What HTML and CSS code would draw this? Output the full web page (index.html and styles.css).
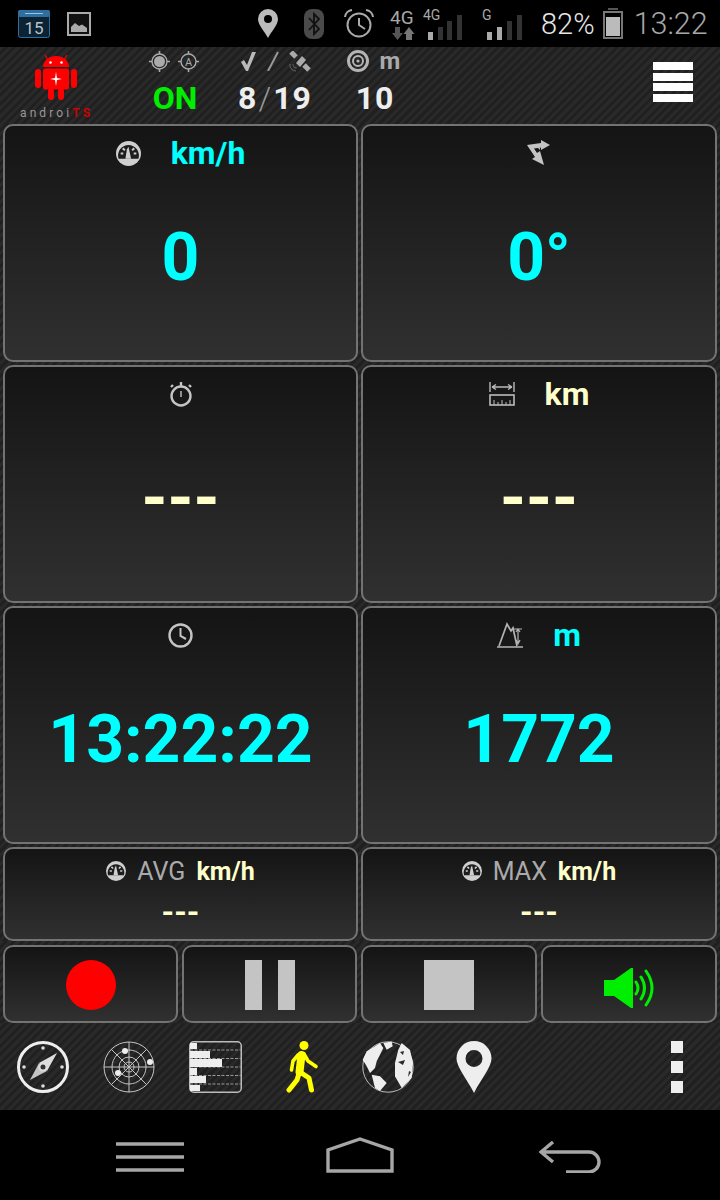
FILE: index.html
```html
<!DOCTYPE html>
<html lang="en">
<head>
    <meta charset="UTF-8">
    <meta name="viewport" content="width=device-width, initial-scale=1.0">
    <title>AndroiTS GPS</title>
    <link rel="stylesheet" href="styles.css">
</head>
<body>
    <svg class="defs" width="0" height="0">
        <symbol id="gauge" viewBox="0 0 24 24">
            <circle cx="12" cy="12" r="12" fill="#cfcfcf"/>
            <path d="M2.500 17 A10 10 0 1 1 21.500 17 Z" fill="#1d1d1d"/>
            <path d="M9 17 L10.500 8 L12 5.500 L14.500 17 Z" fill="#cfcfcf"/>
            <path d="M4.500 12 H7 M6.500 7 L8.500 9 M17.500 7 L15.500 9 M17 12 H19.500" stroke="#cfcfcf" stroke-width="2"/>
        </symbol>
    </svg>

    <div class="statusbar">
        <svg class="st-cal" width="32" height="28" viewBox="0 0 32 28">
            <rect x="0.5" y="0.5" width="31" height="27" rx="2" fill="#0d2233" stroke="#2f6f9f"/>
            <rect x="0" y="0" width="32" height="7" rx="2" fill="#2f6f9f"/>
            <line x1="7" y1="3.5" x2="25" y2="3.5" stroke="#9cc4e0"/>
            <text x="16" y="24" text-anchor="middle" font-family="Roboto" font-size="17" fill="#b8c4cc">15</text>
        </svg>
        <svg class="st-img" width="24" height="24" viewBox="0 0 24 24">
            <rect x="1" y="1" width="22" height="22" fill="#111" stroke="#aaa" stroke-width="2"/>
            <path d="M4 20 V15 L8 11 L12 14 L15 12.5 L20 16 V20 Z" fill="#aaa"/>
        </svg>
        <svg class="st-pin" width="20" height="29" viewBox="0 0 20 29">
            <path fill-rule="evenodd" d="M10 0 A10 10 0 0 1 20 10 C20 16 13 23 10 29 C7 23 0 16 0 10 A10 10 0 0 1 10 0 Z M10 6 A4 4 0 1 0 10 14 A4 4 0 1 0 10 6 Z" fill="#bbb"/>
        </svg>
        <svg class="st-bt" width="20" height="30" viewBox="0 0 20 30">
            <rect x="0" y="0" width="20" height="30" rx="8" fill="#4a4a4a"/>
            <path d="M5 9 L15 20 L10 25 V5 L15 10 L5 21" fill="none" stroke="#111" stroke-width="1.8"/>
        </svg>
        <svg class="st-alarm" width="30" height="29" viewBox="0 0 30 29">
            <circle cx="15" cy="16" r="11.5" fill="none" stroke="#aaa" stroke-width="2"/>
            <path d="M15 9 V16 L21 20" fill="none" stroke="#aaa" stroke-width="2"/>
            <path d="M1 8 A8 8 0 0 1 8 1 M22 1 A8 8 0 0 1 29 8" fill="none" stroke="#aaa" stroke-width="2"/>
        </svg>
        <svg class="st-net" width="28" height="40" viewBox="0 0 28 40">
            <text x="0" y="20" font-family="Roboto" font-size="19" fill="#a8a8a8">4G</text>
            <path d="M5 23 H10 V29 H13 L7.500 36 L2 29 H5 Z" fill="#555"/>
            <path d="M16 36 V30 H13.500 L19 23 L24.500 30 H22 V36 Z" fill="#777"/>
        </svg>
        <svg class="st-sig" width="40" height="40" viewBox="0 0 40 40">
            <text x="0" y="16" font-family="Roboto" font-size="14" fill="#a8a8a8">4G</text>
            <rect x="5" y="28" width="5" height="8" fill="#aaa"/>
            <rect x="15" y="23" width="5" height="13" fill="#333"/>
            <rect x="24" y="17" width="5" height="19" fill="#333"/>
            <rect x="34" y="11" width="5" height="25" fill="#333"/>
        </svg>
        <svg class="st-sig2" width="41" height="40" viewBox="0 0 41 40">
            <text x="0" y="16" font-family="Roboto" font-size="14" fill="#a8a8a8">G</text>
            <rect x="5" y="28" width="5" height="8" fill="#aaa"/>
            <rect x="15" y="23" width="5" height="13" fill="#aaa"/>
            <rect x="25" y="17" width="5" height="19" fill="#333"/>
            <rect x="35" y="11" width="5" height="25" fill="#333"/>
        </svg>
        <span class="st-pct">82%</span>
        <svg class="st-batt" width="20" height="31" viewBox="0 0 20 31">
            <rect x="5" y="0" width="10" height="2" fill="#555"/>
            <rect x="1" y="4" width="18" height="26" fill="none" stroke="#777" stroke-width="2"/>
            <rect x="3" y="9" width="14" height="19" fill="#bbb"/>
        </svg>
        <span class="st-time">13:22</span>
    </div>

    <div class="carbon topbar">
        <div class="logo">
            <svg width="42" height="48" viewBox="0 0 42 48">
                <path d="M10 3 L13 8 M32 3 L29 8" stroke="#f00" stroke-width="1.2"/>
                <path d="M8 15 A13 11 0 0 1 34 15 Z" fill="#f00"/>
                <circle cx="15.500" cy="10.500" r="1.300" fill="#fff"/>
                <circle cx="26.500" cy="10.500" r="1.300" fill="#fff"/>
                <rect x="8" y="16.500" width="26" height="21" rx="2" fill="#f00"/>
                <rect x="0" y="17" width="6" height="19" rx="3" fill="#f00"/>
                <rect x="36" y="17" width="6" height="19" rx="3" fill="#f00"/>
                <rect x="13" y="36" width="6" height="12" rx="3" fill="#f00"/>
                <rect x="23" y="36" width="6" height="12" rx="3" fill="#f00"/>
                <path d="M21 20 L22 26 L27 27 L22 28 L21 34 L20 28 L15 27 L20 26 Z" fill="#fff"/>
            </svg>
            <div class="logo-text">androi<span class="logo-ts">TS</span></div>
        </div>
        <div class="stat">
            <div class="stat-icons fix">
                <svg width="21" height="21" viewBox="0 0 21 21">
                    <circle cx="10.500" cy="10.500" r="7.500" fill="none" stroke="#aaa" stroke-width="1.400"/>
                    <circle cx="10.500" cy="10.500" r="5.500" fill="#aaa"/>
                    <path d="M10.500 0 V3 M10.500 18 V21 M0 10.500 H3 M18 10.500 H21" stroke="#aaa" stroke-width="1.600"/>
                </svg>
                <svg width="21" height="21" viewBox="0 0 21 21">
                    <circle cx="10.500" cy="10.500" r="7.500" fill="none" stroke="#aaa" stroke-width="1.400"/>
                    <path d="M10.500 0 V3 M10.500 18 V21 M0 10.500 H3 M18 10.500 H21" stroke="#aaa" stroke-width="1.600"/>
                    <text x="10.500" y="14.500" text-anchor="middle" font-family="Roboto" font-size="11" fill="#aaa">A</text>
                </svg>
            </div>
            <div class="stat-value on">ON</div>
        </div>
        <div class="stat">
            <div class="stat-icons sats">
                <svg width="17" height="21" viewBox="0 0 17 21">
                    <path d="M1 11 L6 20 L8 20 L16 1 L12 1 L7 14 L4 9 Z" fill="#bbb"/>
                </svg>
                <svg width="12" height="20" viewBox="0 0 12 20">
                    <path d="M1 20 L11 1" stroke="#999" stroke-width="2"/>
                </svg>
                <svg width="22" height="21" viewBox="0 0 22 21">
                    <path d="M2 1 L7 6 M15 14 L20 19" stroke="#aaa" stroke-width="5"/>
                    <path d="M7 12 L13 5 L17 9 L11 16 Z" fill="#aaa"/>
                    <path d="M1 13 A6 6 0 0 0 7 20 M4 13 A3.500 3.500 0 0 0 7.500 17" fill="none" stroke="#666"/>
                </svg>
            </div>
            <div class="stat-value">8<span class="slash">/</span>19</div>
        </div>
        <div class="stat">
            <div class="stat-icons acc">
                <svg width="22" height="22" viewBox="0 0 22 22">
                    <circle cx="11" cy="11" r="9.500" fill="none" stroke="#b4b4b4" stroke-width="3"/>
                    <circle cx="11" cy="11" r="5" fill="none" stroke="#b4b4b4" stroke-width="2"/>
                    <circle cx="11" cy="11" r="1.600" fill="#b4b4b4"/>
                </svg>
                <span class="acc-unit">m</span>
            </div>
            <div class="stat-value">10</div>
        </div>
        <div class="burger">
            <i></i><i></i><i></i><i></i>
        </div>
    </div>

    <div class="panels">
        <div class="tile">
            <div class="tile-head">
                <svg width="25" height="25"><use href="#gauge"/></svg>
                <span class="unit cyan">km/h</span>
            </div>
            <div class="tile-value cyan">0</div>
        </div>
        <div class="tile">
            <div class="tile-head">
                <svg width="26" height="26" viewBox="0 0 26 26">
                    <path fill-rule="evenodd" d="M1 5 L15 3 L15 0 L24 5 L15 10 L15 7.500 L8 8.500 L11 13 L14 11 L18 25 L6 19 L9 17 Z M12 8 L14 7.500 L14 10 Z" fill="#c4c4c4"/>
                </svg>
            </div>
            <div class="tile-value cyan">0°</div>
        </div>
        <div class="tile">
            <div class="tile-head">
                <svg width="24" height="25" viewBox="0 0 24 25">
                    <circle cx="12" cy="14" r="9.500" fill="none" stroke="#c4c4c4" stroke-width="2.400"/>
                    <path d="M12 9 V15" stroke="#c4c4c4" stroke-width="1.400"/>
                    <path d="M12 0 V4.500 M2 5 L4 3 M22 5 L20 3" stroke="#c4c4c4" stroke-width="2.400"/>
                </svg>
            </div>
            <div class="tile-value cream">---</div>
        </div>
        <div class="tile">
            <div class="tile-head">
                <svg width="26" height="24" viewBox="0 0 26 24">
                    <path d="M1 0 V10 M25 0 V10 M3 5 H23 M3 5 L7 2.500 M3 5 L7 7.500 M23 5 L19 2.500 M23 5 L19 7.500" fill="none" stroke="#bbb" stroke-width="1.400"/>
                    <rect x="1" y="13" width="24" height="10" fill="none" stroke="#bbb" stroke-width="1.600"/>
                    <path d="M5 23 V18 M9 23 V20 M13 23 V18 M17 23 V20 M21 23 V18" stroke="#bbb"/>
                </svg>
                <span class="unit cream">km</span>
            </div>
            <div class="tile-value cream">---</div>
        </div>
        <div class="tile">
            <div class="tile-head">
                <svg width="25" height="25" viewBox="0 0 25 25">
                    <circle cx="12.500" cy="12.500" r="11" fill="none" stroke="#c4c4c4" stroke-width="2.400"/>
                    <path d="M12.500 5 V13 L18 16" fill="none" stroke="#c4c4c4" stroke-width="2"/>
                </svg>
            </div>
            <div class="tile-value cyan">13:22:22</div>
        </div>
        <div class="tile">
            <div class="tile-head">
                <svg width="26" height="26" viewBox="0 0 26 26">
                    <path d="M0 25 H26 M2 24 L10 2 L14 9 L16 6 L20 24" fill="none" stroke="#b4b4b4" stroke-width="1.700"/>
                    <path d="M17 7 H25 M21 7 V21 M19 18 L21 22 L23 18 M19 10 L21 7 L23 10" fill="none" stroke="#b4b4b4" stroke-width="1.200"/>
                </svg>
                <span class="unit cyan">m</span>
            </div>
            <div class="tile-value cyan">1772</div>
        </div>
        <div class="tile tile-small">
            <div class="tile-head">
                <svg width="20" height="20"><use href="#gauge"/></svg>
                <span class="label">AVG</span>
                <span class="unit cream">km/h</span>
            </div>
            <div class="tile-value cream">---</div>
        </div>
        <div class="tile tile-small">
            <div class="tile-head">
                <svg width="20" height="20"><use href="#gauge"/></svg>
                <span class="label">MAX</span>
                <span class="unit cream">km/h</span>
            </div>
            <div class="tile-value cream">---</div>
        </div>
    </div>

    <div class="controls">
        <div class="tile ctrl"><div class="rec"></div></div>
        <div class="tile ctrl"><div class="pause"><i></i><i></i></div></div>
        <div class="tile ctrl"><div class="stop"></div></div>
        <div class="tile ctrl">
            <svg class="speaker" width="51" height="40" viewBox="0 0 51 40">
                <path d="M0 12 H10 L27 0 H29 V40 H27 L10 28 H0 Z" fill="#0e0"/>
                <path d="M32 14 Q36 20 32 26 M37 9 Q44 20 37 31 M42 3 Q54 20 42 37" fill="none" stroke="#0e0" stroke-width="3" stroke-linecap="round"/>
            </svg>
        </div>
    </div>

    <div class="carbon toolbar">
        <svg width="52" height="52" viewBox="0 0 52 52">
            <circle cx="26" cy="26" r="24.500" fill="none" stroke="#eee" stroke-width="3"/>
            <path d="M40 12 L30 30 L22 22 Z" fill="#ddd"/>
            <path d="M13 39 L22 22 L30 30 Z" fill="#c4c4c4"/>
            <circle cx="26" cy="26" r="3.500" fill="#333" stroke="#ddd" stroke-width="2"/>
            <circle cx="26" cy="7" r="1.800" fill="#ddd"/><circle cx="26" cy="45" r="1.800" fill="#ddd"/>
            <circle cx="7" cy="26" r="1.800" fill="#ddd"/><circle cx="45" cy="26" r="1.800" fill="#ddd"/>
        </svg>
        <svg width="52" height="52" viewBox="0 0 52 52">
            <g fill="none" stroke="#c4c4c4" stroke-width="1">
                <circle cx="26" cy="26" r="25"/><circle cx="26" cy="26" r="17"/>
                <circle cx="26" cy="26" r="10"/><circle cx="26" cy="26" r="5"/>
                <path d="M26 1 V51 M1 26 H51 M8.300 8.300 L43.700 43.700 M43.700 8.300 L8.300 43.700"/>
            </g>
            <circle cx="22" cy="10" r="3" fill="#eee"/>
            <circle cx="47" cy="21" r="3" fill="#eee"/>
            <circle cx="15" cy="32" r="3" fill="#eee"/>
        </svg>
        <svg width="53" height="52" viewBox="0 0 53 52">
            <rect x="0.750" y="0.750" width="51.500" height="50.500" rx="4" fill="none" stroke="#bbb" stroke-width="1.500"/>
            <path d="M1 9 H52 M1 17.500 H52 M1 26 H52 M1 34.500 H52 M1 43 H52" stroke="#999" stroke-dasharray="3 1.500"/>
            <g fill="#eee">
                <rect x="1" y="2" width="7" height="6"/><rect x="1" y="10" width="20" height="7"/>
                <rect x="1" y="18" width="32" height="8"/><rect x="1" y="27" width="7" height="7"/>
                <rect x="1" y="35" width="16" height="7"/><rect x="1" y="44" width="10" height="6"/>
            </g>
        </svg>
        <svg class="walker" width="52" height="52" viewBox="0 0 52 52">
            <circle cx="28" cy="4.500" r="4.500" fill="#ff0"/>
            <path d="M25.500 14 L23.500 31" fill="none" stroke="#ff0" stroke-width="8" stroke-linecap="round"/>
            <path d="M23.500 31 L21 39 L13 49" fill="none" stroke="#ff0" stroke-width="5" stroke-linecap="round" stroke-linejoin="round"/>
            <path d="M24 31 L33 37 L35.500 49" fill="none" stroke="#ff0" stroke-width="5" stroke-linecap="round" stroke-linejoin="round"/>
            <path d="M22 14 L17 20 L15.500 29 M28 13 L32 20 L40 25.500" fill="none" stroke="#ff0" stroke-width="3.600" stroke-linecap="round" stroke-linejoin="round"/>
        </svg>
        <svg width="52" height="52" viewBox="0 0 52 52">
            <circle cx="26" cy="26" r="25.200" fill="none" stroke="#bbb" stroke-width="1"/>
            <path d="M0.700 18.700 L4.700 10.300 L13 5.300 L18 2 L21.300 7 L18 13.700 L14.700 20.300 L13 27 L8 32 L4.700 25.300 Z" fill="#eee"/>
            <path d="M21.300 2 L29.700 0.500 L30.700 5.300 L24.700 8.700 Z" fill="#eee"/>
            <path d="M9.700 33.700 L18 35.300 L24.700 42 L18 50 L13 47 Z" fill="#eee"/>
            <path d="M33 22 L36.300 8.700 L39.700 2 L48 9 L51 22 L49.700 37 L39.700 47 L33 35.300 Z" fill="#eee"/>
            <path d="M36 21 L43 19 L41 24 Z M47 30 L49 31 L46 36 Z M38 11 L42 10 L41 14 Z" fill="#2a2a2a"/>
        </svg>
        <svg class="pin" width="52" height="52" viewBox="0 0 52 52">
            <path fill-rule="evenodd" d="M26 0 A17.500 17.500 0 0 1 43.500 17.500 C43.500 26 33 38 26 52 C19 38 8.500 26 8.500 17.500 A17.500 17.500 0 0 1 26 0 Z M26 9 A8.500 8.500 0 1 0 26 26 A8.500 8.500 0 1 0 26 9 Z" fill="#eee"/>
        </svg>
        <div class="more"><i></i><i></i><i></i></div>
    </div>

    <div class="softkeys">
        <svg width="68" height="30" viewBox="0 0 68 30">
            <path d="M0 2 H68 M0 15 H68 M0 28 H68" stroke="#a6a6a6" stroke-width="3.400"/>
        </svg>
        <svg class="key-home" width="68" height="36" viewBox="0 0 68 36">
            <path d="M2 34 V13 L34 2 L66 13 V34 Z" fill="none" stroke="#a6a6a6" stroke-width="3.400"/>
        </svg>
        <svg class="key-back" width="62" height="32" viewBox="0 0 62 32">
            <path d="M14 1 L2 11 L14 21 M2 11 H50 A10 10 0 0 1 50 31 H27" fill="none" stroke="#a6a6a6" stroke-width="3.400"/>
        </svg>
    </div>
</body>
</html>
```
FILE: styles.css
```css
* {
    box-sizing: border-box;
}
html, body {
    margin: 0;
    background-color: #000;
}
body {
    width: 720px;
    height: 1200px;
    overflow: hidden;
    font-family: Roboto, "Liberation Sans", sans-serif;
}
svg {
    display: block;
    flex: none;
}
.defs {
    position: absolute;
}

/* status bar */
.statusbar {
    display: flex;
    align-items: center;
    height: 47px;
    padding-left: 18px;
    color: #a8a8a8;
}
.st-img { margin-left: 17px; }
.st-pin { margin-left: 167px; }
.st-bt { margin-left: 26px; }
.st-alarm { margin-left: 20px; }
.st-net { margin-left: 16px; }
.st-sig { margin-left: 5px; }
.st-sig2 { margin-left: 19px; }
.st-pct {
    margin-left: 18px;
    font-size: 29px;
    color: #e6e6e6;
    font-weight: 300;
}
.st-batt { margin-left: 8px; }
.st-time {
    margin-left: 11px;
    font-size: 30.500px;
    font-weight: 300;
}

/* striped backdrop of the top bar, panels and toolbar */
.carbon, .panels, .controls {
    background-color: #262626;
    background-image: repeating-linear-gradient(135deg, #292929 0, #292929 3px, #202020 3px, #202020 6px);
}
.topbar {
    display: flex;
    height: 77px;
}
.logo {
    width: 125px;
    padding: 5px 0 0 20px;
}
.logo svg {
    margin-left: 15px;
}
.logo-text {
    width: 80px;
    margin-top: 7px;
    font-size: 12px;
    line-height: 12px;
    letter-spacing: 3.100px;
    color: #999;
}
.logo-ts {
    color: #c00;
    font-weight: 700;
}
.stat {
    width: 100px;
    display: flex;
    flex-direction: column;
    align-items: center;
}
.stat-icons {
    height: 28px;
    display: flex;
    align-items: center;
    gap: 8px;
    margin-bottom: 4px;
}
.stat-icons.fix { margin-right: 2px; }
.stat-icons.sats { gap: 10px; }
.stat-icons.acc { gap: 11px; margin-left: -3px; }
.acc-unit {
    font-size: 24px;
    font-weight: 700;
    color: #aaa;
}
.stat-value {
    font-size: 32px;
    line-height: 38px;
    font-weight: 700;
    color: #eee;
    letter-spacing: 1px;
}
.stat-value.on {
    color: #0e0;
    letter-spacing: 0;
}
.slash {
    margin: 0 1px;
    font-weight: 300;
    color: #999;
}
.burger {
    margin: 15px 27px 0 auto;
    width: 40px;
}
.burger i {
    display: block;
    height: 8px;
    margin-bottom: 2.500px;
    background-color: #fff;
}

/* data panels */
.panels {
    display: grid;
    grid-template-columns: 355px 356px;
    grid-template-rows: 238px 238px 238px 94px;
    gap: 3px;
    padding: 0 3px;
}
.tile {
    border: 2px solid #737373;
    border-radius: 10px;
    background: linear-gradient(#141414, #303030);
    display: flex;
    flex-direction: column;
    align-items: center;
}
.tile-head {
    display: flex;
    align-items: center;
    justify-content: center;
    height: 54px;
    gap: 30px;
}
.tile-value {
    margin-top: 33px;
    font-size: 66px;
    line-height: 90px;
    font-weight: 700;
}
.unit {
    font-size: 32px;
    font-weight: 700;
}
.cyan { color: #0ff; }
.cream { color: #ffc; }
.tile-small .tile-head {
    height: 44px;
    gap: 11px;
}
.tile-small .unit {
    font-size: 25px;
}
.label {
    font-size: 25px;
    color: #aaa;
}
.tile-small .tile-value {
    margin-top: -1px;
    font-size: 32px;
    line-height: 40px;
}

/* record / pause / stop / sound */
.controls {
    display: grid;
    grid-template-columns: 175px 175px 176px 176px;
    gap: 4px;
    padding: 4px 3px 0;
    height: 82px;
}
.ctrl {
    justify-content: center;
    padding-top: 2px;
}
.rec {
    width: 50px;
    height: 50px;
    border-radius: 50%;
    background-color: #f00;
}
.pause {
    display: flex;
    gap: 16px;
}
.pause i {
    display: block;
    width: 17px;
    height: 50px;
    background-color: #c4c4c4;
}
.stop {
    width: 50px;
    height: 50px;
    background-color: #c4c4c4;
}
.speaker { margin-top: 5px; }

/* bottom toolbar */
.toolbar {
    display: flex;
    align-items: center;
    gap: 34px;
    height: 87px;
    padding-left: 17px;
}
.more {
    margin-left: auto;
    margin-right: 37px;
    display: flex;
    flex-direction: column;
    gap: 8px;
}
.more i {
    display: block;
    width: 12px;
    height: 12px;
    background-color: #eee;
}

/* android soft keys */
.softkeys {
    display: flex;
    align-items: center;
    height: 90px;
    padding: 3px 0 0 116px;
}
.key-home { margin-left: 142px; margin-bottom: 3px; }
.key-back { margin-left: 145px; }
```
